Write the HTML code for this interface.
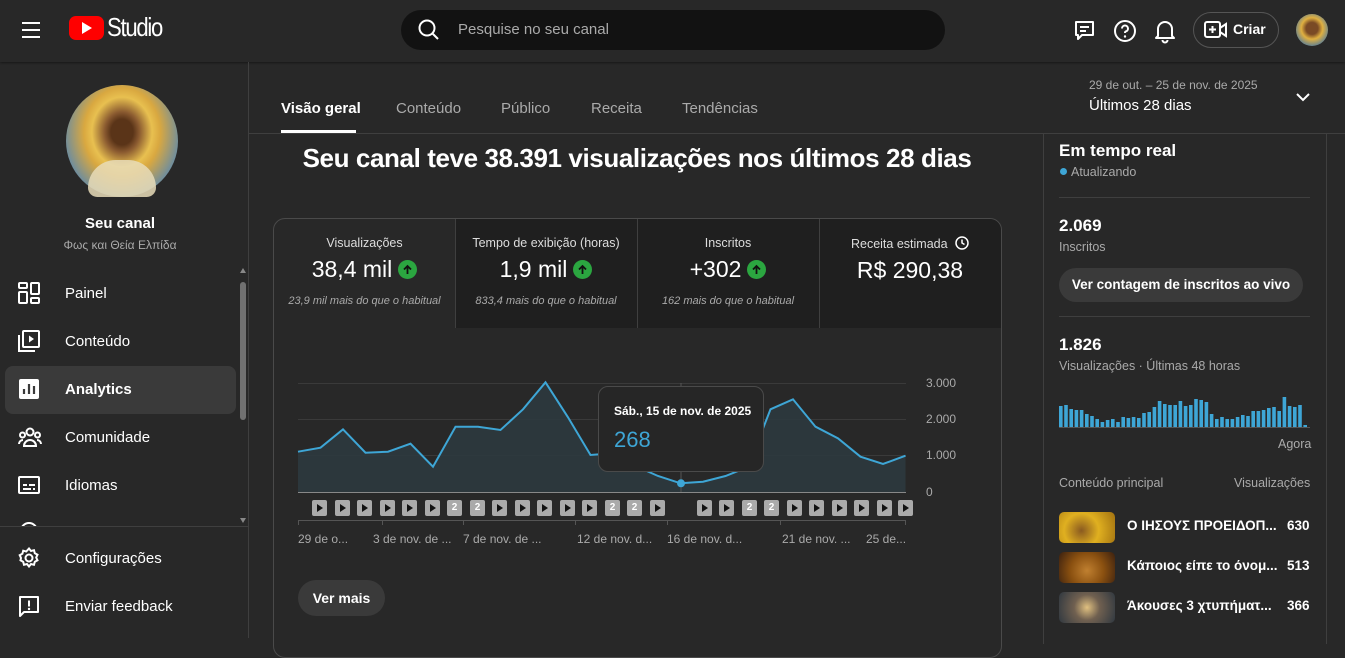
<!DOCTYPE html>
<html><head><meta charset="utf-8"><style>
*{box-sizing:border-box;margin:0;padding:0}
body{width:1345px;height:638px;overflow:hidden;background:#282828;color:#fff;font-family:"Liberation Sans",sans-serif;position:relative}
.a{position:absolute}
.g{color:#aaa}
.nav{position:absolute;left:0;width:240px;height:48px;display:flex;align-items:center;font-size:15px}
.nav svg{position:absolute;left:18px}
.nav span{position:absolute;left:65px}
.tile{position:absolute;top:1px;height:108px;text-align:center}
.tile .t{font-size:12.5px;color:#ddd;margin-top:17px}
.tile .v{font-size:23px;margin-top:6px;display:flex;justify-content:center;align-items:center;gap:6px}
.tile .s{font-size:11px;color:#aaa;font-style:italic;margin-top:12px}
.up{width:19px;height:19px;border-radius:50%;background:#2ba640;display:inline-flex;align-items:center;justify-content:center}
.bx{position:absolute;top:500px;width:15px;height:16px;background:#aaa;border-radius:2px;font-size:10px;font-weight:bold;color:#fff;text-align:center;line-height:16px}
.bx.p::after{content:"";position:absolute;left:5px;top:4px;border-left:6px solid #111;border-top:4px solid transparent;border-bottom:4px solid transparent}
.xl{position:absolute;top:532px;font-size:12px;color:#aaa}
.yl{position:absolute;left:926px;font-size:12px;color:#aaa}
</style></head><body>
<div class="a" style="left:0;top:0;width:1345px;height:62px;background:#282828;box-shadow:0 1px 2px rgba(0,0,0,.4)"></div>
<svg class="a" style="left:21px;top:21px" width="20" height="18"><path d="M1 2h18M1 9h18M1 16h18" stroke="#fff" stroke-width="2"/></svg>
<div class="a" style="left:69px;top:16px;width:35px;height:24px;background:#f00;border-radius:7px"></div>
<svg class="a" style="left:82px;top:22px" width="12" height="12"><path d="M0 0L10 6L0 12Z" fill="#fff"/></svg>
<div class="a" style="left:107px;top:12px;font-size:26px;letter-spacing:-1.5px;transform:scaleX(.85);transform-origin:left">Studio</div>
<div class="a" style="left:401px;top:10px;width:544px;height:40px;background:#121212;border-radius:20px"></div>
<svg class="a" style="left:418px;top:19px" width="22" height="22"><circle cx="9" cy="9" r="7.5" stroke="#fff" stroke-width="2" fill="none"/><path d="M14.5 14.5L20 20" stroke="#fff" stroke-width="2"/></svg>
<div class="a g" style="left:458px;top:21px;font-size:15px">Pesquise no seu canal</div>
<svg class="a" style="left:1073px;top:19px" width="24" height="24"><path d="M3 3h17v13H9l-4 4v-4H3z" stroke="#fff" stroke-width="2" fill="none" stroke-linejoin="round"/><path d="M7 8h9M7 12h6" stroke="#fff" stroke-width="2"/></svg>
<svg class="a" style="left:1113px;top:19px" width="24" height="24"><circle cx="12" cy="12" r="10" stroke="#fff" stroke-width="2" fill="none"/><path d="M9 9.5a3 3 0 1 1 3.5 3c-.5.2-.5.8-.5 1.5" stroke="#fff" stroke-width="2" fill="none"/><circle cx="12" cy="17.5" r="1.2" fill="#fff"/></svg>
<svg class="a" style="left:1153px;top:18px" width="24" height="26"><path d="M5 18V11a7 7 0 0 1 14 0v7l2 2H3z" stroke="#fff" stroke-width="2" fill="none" stroke-linejoin="round"/><path d="M9.5 22a2.5 2.5 0 0 0 5 0" stroke="#fff" stroke-width="2" fill="none"/></svg>
<div class="a" style="left:1193px;top:12px;width:86px;height:36px;border:1px solid #555;border-radius:18px"></div>
<svg class="a" style="left:1204px;top:20px" width="24" height="20"><rect x="1" y="2" width="15" height="15" rx="2" stroke="#fff" stroke-width="2" fill="none"/><path d="M8.5 6v7M5 9.5h7" stroke="#fff" stroke-width="2"/><path d="M16 8l6-4v12l-6-4" stroke="#fff" stroke-width="2" fill="none"/></svg>
<div class="a" style="left:1233px;top:21px;font-size:14px;font-weight:bold">Criar</div>
<div class="a" style="left:1296px;top:14px;width:32px;height:32px;border-radius:50%;background:radial-gradient(circle at 50% 45%,#7a4a25 0 25%,#e0b040 45%,#4f7aa0 80%)"></div>
<div class="a" style="left:248px;top:62px;width:1px;height:576px;background:#3f3f3f"></div>
<div class="a" style="left:66px;top:85px;width:112px;height:112px;border-radius:50%;background:radial-gradient(ellipse at 50% 42%,#5a3418 0 14%,#8a5a30 22%,#e8c050 38%,#d9a840 48%,#5a88b0 78%,#2f5f88 100%)"></div>
<div class="a" style="left:88px;top:160px;width:68px;height:37px;background:#e8dcb8;border-radius:30px 30px 10px 10px;opacity:.85"></div>
<div class="a" style="left:0;top:215px;width:240px;text-align:center;font-size:15px;font-weight:bold">Seu canal</div>
<div class="a g" style="left:0;top:238px;width:240px;text-align:center;font-size:12px">Φως και Θεία Ελπίδα</div>
<div class="a" style="left:5px;top:366px;width:231px;height:48px;background:#3a3a3a;border-radius:8px"></div>
<div class="a" style="left:240px;top:282px;width:6px;height:138px;background:#717171;border-radius:3px"></div>
<div class="a" style="left:240px;top:268px;border-bottom:5px solid #888;border-left:3px solid transparent;border-right:3px solid transparent"></div>
<div class="a" style="left:240px;top:518px;border-top:5px solid #888;border-left:3px solid transparent;border-right:3px solid transparent"></div>
<div class="nav" style="top:269px"><svg width="22" height="22"><g stroke="#fff" stroke-width="2" fill="none"><rect x="1" y="1" width="8" height="5" rx="1"/><rect x="1" y="10" width="8" height="11" rx="1"/><rect x="13" y="1" width="8" height="11" rx="1"/><rect x="13" y="16" width="8" height="5" rx="1"/></g></svg><span>Painel</span></div>
<div class="nav" style="top:317px"><svg width="22" height="22"><g stroke="#fff" stroke-width="2" fill="none"><rect x="5" y="1" width="16" height="16" rx="1"/><path d="M1 5v16h16"/></g><path d="M11 5.5l5 3.5-5 3.5z" fill="#fff"/></svg><span>Conteúdo</span></div>
<div class="nav" style="top:365px;font-weight:bold"><svg width="22" height="22"><rect x="1" y="1" width="20" height="20" rx="2" fill="#fff"/><path d="M6 16v-5M11 16V6M16 16v-8" stroke="#3a3a3a" stroke-width="2.2"/></svg><span>Analytics</span></div>
<div class="nav" style="top:413px"><svg width="24" height="22"><g stroke="#fff" stroke-width="2" fill="none"><circle cx="12" cy="6" r="3.5"/><circle cx="4.5" cy="9" r="2.5"/><circle cx="19.5" cy="9" r="2.5"/><path d="M6 20a6 6 0 0 1 12 0zM1 18a4 4 0 0 1 4-4M23 18a4 4 0 0 0-4-4"/></g></svg><span>Comunidade</span></div>
<div class="nav" style="top:461px"><svg width="22" height="22"><g stroke="#fff" stroke-width="2" fill="none"><rect x="1" y="3" width="20" height="16" rx="1"/><path d="M5 11h4M11 11h6M5 15h8M15 15h2"/></g></svg><span>Idiomas</span></div>
<div class="a" style="left:0;top:526px;width:248px;height:1px;background:#3f3f3f"></div>
<div class="a" style="left:0;top:520px;width:240px;height:6px;overflow:hidden"><div style="position:absolute;left:20px;top:2px;width:18px;height:18px;border:2px solid #fff;border-radius:50%"></div></div>
<div class="nav" style="top:534px"><svg width="22" height="22"><g stroke="#fff" stroke-width="2" fill="none"><circle cx="11" cy="11" r="3.5"/><path d="M11 1.5l2 2.5 3-.8.8 3 2.7 1.5-1.3 2.8 1.3 2.8-2.7 1.5-.8 3-3-.8-2 2.5-2-2.5-3 .8-.8-3-2.7-1.5L3 11 1.7 8.2l2.7-1.5.8-3 3 .8z"/></g></svg><span>Configurações</span></div>
<div class="nav" style="top:582px"><svg width="22" height="22"><path d="M2 2h18v15H6l-4 4z" stroke="#fff" stroke-width="2" fill="none" stroke-linejoin="round"/><path d="M11 5.5v6" stroke="#fff" stroke-width="2"/><circle cx="11" cy="14" r="1.2" fill="#fff"/></svg><span>Enviar feedback</span></div>
<div class="a" style="left:249px;top:133px;width:1096px;height:1px;background:#3f3f3f"></div>
<div class="a" style="left:281px;top:100px;font-size:15px;font-weight:bold">Visão geral</div>
<div class="a" style="left:281px;top:130px;width:75px;height:3px;background:#fff"></div>
<div class="a g" style="left:396px;top:100px;font-size:15px">Conteúdo</div>
<div class="a g" style="left:501px;top:100px;font-size:15px">Público</div>
<div class="a g" style="left:591px;top:100px;font-size:15px">Receita</div>
<div class="a g" style="left:682px;top:100px;font-size:15px">Tendências</div>
<div class="a g" style="left:1089px;top:78px;font-size:12px">29 de out. – 25 de nov. de 2025</div>
<div class="a" style="left:1089px;top:97px;font-size:15px">Últimos 28 dias</div>
<svg class="a" style="left:1295px;top:92px" width="16" height="12"><path d="M2 2l6 6 6-6" stroke="#fff" stroke-width="2" fill="none"/></svg>
<div class="a" style="left:263px;top:143px;width:748px;text-align:center;font-size:26px;font-weight:bold;letter-spacing:-.4px">Seu canal teve 38.391 visualizações nos últimos 28 dias</div>
<div class="a" style="left:273px;top:218px;width:729px;height:440px;border:1px solid #4a4a4a;border-radius:12px;overflow:hidden">
<div class="a" style="left:182px;top:0;width:546px;height:109px;background:#1f1f1f"></div>
<div class="a" style="left:181px;top:0;width:1px;height:109px;background:#3f3f3f"></div>
<div class="a" style="left:363px;top:0;width:1px;height:109px;background:#3f3f3f"></div>
<div class="a" style="left:545px;top:0;width:1px;height:109px;background:#3f3f3f"></div>
</div>
<div class="tile" style="left:274px;top:219px;width:181px"><div class="t">Visualizações</div><div class="v">38,4 mil <span class="up"><svg width="11" height="11"><path d="M5.5 10V2M2 5.5l3.5-3.5 3.5 3.5" stroke="#111" stroke-width="1.8" fill="none"/></svg></span></div><div class="s">23,9 mil mais do que o habitual</div></div>
<div class="tile" style="left:455px;top:219px;width:182px"><div class="t">Tempo de exibição (horas)</div><div class="v">1,9 mil <span class="up"><svg width="11" height="11"><path d="M5.5 10V2M2 5.5l3.5-3.5 3.5 3.5" stroke="#111" stroke-width="1.8" fill="none"/></svg></span></div><div class="s">833,4 mais do que o habitual</div></div>
<div class="tile" style="left:637px;top:219px;width:182px"><div class="t">Inscritos</div><div class="v">+302 <span class="up"><svg width="11" height="11"><path d="M5.5 10V2M2 5.5l3.5-3.5 3.5 3.5" stroke="#111" stroke-width="1.8" fill="none"/></svg></span></div><div class="s">162 mais do que o habitual</div></div>
<div class="tile" style="left:819px;top:219px;width:182px"><div class="t">Receita estimada <svg width="14" height="14" style="vertical-align:-2px;margin-left:4px"><circle cx="7" cy="7" r="6" stroke="#fff" stroke-width="1.5" fill="none"/><path d="M7 3.5V7l2.5 1.5" stroke="#fff" stroke-width="1.5" fill="none"/></svg></div><div class="v">R$ 290,38</div></div>
<svg class="a" style="left:0;top:0" width="1345" height="638">
<g stroke="#3a3a3a" stroke-width="1"><path d="M298 383.5H906M298 419.5H906M298 455.5H906"/></g>
<path d="M298 451.7L320.5 447.7L343 429.3L365.5 452.7L388 451.7L410.5 443.7L433 466.7L455.5 426.7L478 426.7L500.5 430L523 409.3L545.5 382.3L568 417.3L590.5 455L613 453.3L635.5 466L658 476L680.5 483.3L703 481.7L725.5 476L748 467L770.5 409.3L793 399.3L815.5 426.7L838 438.3L860.5 456.7L883 464L905.5 455.7V492H298Z" fill="#2d3a40" fill-opacity=".85"/>
<path d="M298 451.7L320.5 447.7L343 429.3L365.5 452.7L388 451.7L410.5 443.7L433 466.7L455.5 426.7L478 426.7L500.5 430L523 409.3L545.5 382.3L568 417.3L590.5 455L613 453.3L635.5 466L658 476L680.5 483.3L703 481.7L725.5 476L748 467L770.5 409.3L793 399.3L815.5 426.7L838 438.3L860.5 456.7L883 464L905.5 455.7" stroke="#3ea6d6" stroke-width="2" fill="none"/>
<path d="M298 492.5H906" stroke="#888" stroke-width="1"/>
<path d="M681 383V492" stroke="#555" stroke-width="1"/>
<circle cx="681" cy="483.3" r="4" fill="#3ea6d6"/>
<path d="M298 520.5H906" stroke="#555"/>
<g stroke="#555"><path d="M298.5 520v5M382.5 520v5M463.5 520v5M575.5 520v5M667.5 520v5M780.5 520v5M905.5 520v5"/></g>
</svg>
<div class="a" style="left:598px;top:386px;width:166px;height:86px;background:#262626;border:1px solid #4a4a4a;border-radius:10px"></div>
<div class="a" style="left:614px;top:404px;font-size:12px;font-weight:bold">Sáb., 15 de nov. de 2025</div>
<div class="a" style="left:614px;top:427px;font-size:22px;color:#3ea6d6">268</div>
<div class="yl" style="top:376px">3.000</div><div class="yl" style="top:412px">2.000</div><div class="yl" style="top:448px">1.000</div><div class="yl" style="top:485px">0</div>
<div class="bx p" style="left:312px"></div><div class="bx p" style="left:335px"></div><div class="bx p" style="left:357px"></div><div class="bx p" style="left:380px"></div><div class="bx p" style="left:402px"></div><div class="bx p" style="left:425px"></div><div class="bx" style="left:447px">2</div><div class="bx" style="left:470px">2</div><div class="bx p" style="left:492px"></div><div class="bx p" style="left:515px"></div><div class="bx p" style="left:537px"></div><div class="bx p" style="left:560px"></div><div class="bx p" style="left:582px"></div><div class="bx" style="left:605px">2</div><div class="bx" style="left:627px">2</div><div class="bx p" style="left:650px"></div>
<div class="bx p" style="left:697px"></div><div class="bx p" style="left:719px"></div><div class="bx" style="left:742px">2</div><div class="bx" style="left:764px">2</div><div class="bx p" style="left:787px"></div><div class="bx p" style="left:809px"></div><div class="bx p" style="left:832px"></div><div class="bx p" style="left:854px"></div><div class="bx p" style="left:877px"></div><div class="bx p" style="left:898px"></div>
<div class="xl" style="left:298px">29 de o...</div><div class="xl" style="left:373px">3 de nov. de ...</div><div class="xl" style="left:463px">7 de nov. de ...</div><div class="xl" style="left:577px">12 de nov. d...</div><div class="xl" style="left:667px">16 de nov. d...</div><div class="xl" style="left:782px">21 de nov. ...</div><div class="xl" style="left:866px">25 de...</div>
<div class="a" style="left:298px;top:580px;width:87px;height:36px;background:#3a3a3a;border-radius:18px;font-size:14px;font-weight:bold;text-align:center;line-height:36px">Ver mais</div>
<div class="a" style="left:1043px;top:134px;width:284px;height:510px;border-left:1px solid #3f3f3f;border-right:1px solid #3f3f3f"></div>
<div class="a" style="left:1059px;top:141px;font-size:17px;font-weight:bold">Em tempo real</div>
<div class="a" style="left:1060px;top:168px;width:7px;height:7px;border-radius:50%;background:#3ea6d6"></div>
<div class="a g" style="left:1071px;top:165px;font-size:12.5px">Atualizando</div>
<div class="a" style="left:1059px;top:197px;width:251px;height:1px;background:#3f3f3f"></div>
<div class="a" style="left:1059px;top:216px;font-size:17px;font-weight:bold">2.069</div>
<div class="a g" style="left:1059px;top:240px;font-size:12.5px">Inscritos</div>
<div class="a" style="left:1059px;top:268px;width:244px;height:34px;background:#3a3a3a;border-radius:17px;font-size:13.5px;font-weight:bold;text-align:center;line-height:34px">Ver contagem de inscritos ao vivo</div>
<div class="a" style="left:1059px;top:316px;width:251px;height:1px;background:#3f3f3f"></div>
<div class="a" style="left:1059px;top:335px;font-size:17px;font-weight:bold">1.826</div>
<div class="a g" style="left:1059px;top:359px;font-size:12.5px">Visualizações · Últimas 48 horas</div>
<svg class="a" style="left:1059px;top:395px" width="252" height="35"><g fill="#3ea6d6">
<rect x="0" y="11" width="3.6" height="21"/><rect x="5.2" y="10" width="3.6" height="22"/><rect x="10.4" y="14" width="3.6" height="18"/><rect x="15.6" y="15" width="3.6" height="17"/><rect x="20.8" y="15" width="3.6" height="17"/><rect x="26" y="19" width="3.6" height="13"/><rect x="31.2" y="21" width="3.6" height="11"/><rect x="36.4" y="24" width="3.6" height="8"/><rect x="41.6" y="27" width="3.6" height="5"/><rect x="46.8" y="25" width="3.6" height="7"/><rect x="52" y="24" width="3.6" height="8"/><rect x="57.2" y="27" width="3.6" height="5"/><rect x="62.4" y="22" width="3.6" height="10"/><rect x="67.6" y="23" width="3.6" height="9"/><rect x="72.8" y="22" width="3.6" height="10"/><rect x="78" y="23" width="3.6" height="9"/><rect x="83.2" y="18" width="3.6" height="14"/><rect x="88.4" y="17" width="3.6" height="15"/><rect x="93.6" y="12" width="3.6" height="20"/><rect x="98.8" y="6" width="3.6" height="26"/><rect x="104" y="9" width="3.6" height="23"/><rect x="109.2" y="10" width="3.6" height="22"/><rect x="114.4" y="10" width="3.6" height="22"/><rect x="119.6" y="6" width="3.6" height="26"/><rect x="124.8" y="11" width="3.6" height="21"/><rect x="130" y="10" width="3.6" height="22"/><rect x="135.2" y="4" width="3.6" height="28"/><rect x="140.4" y="5" width="3.6" height="27"/><rect x="145.6" y="7" width="3.6" height="25"/><rect x="150.8" y="19" width="3.6" height="13"/><rect x="156" y="24" width="3.6" height="8"/><rect x="161.2" y="22" width="3.6" height="10"/><rect x="166.4" y="24" width="3.6" height="8"/><rect x="171.6" y="24" width="3.6" height="8"/><rect x="176.8" y="22" width="3.6" height="10"/><rect x="182" y="20" width="3.6" height="12"/><rect x="187.2" y="21" width="3.6" height="11"/><rect x="192.4" y="16" width="3.6" height="16"/><rect x="197.6" y="16" width="3.6" height="16"/><rect x="202.8" y="15" width="3.6" height="17"/><rect x="208" y="13" width="3.6" height="19"/><rect x="213.2" y="12" width="3.6" height="20"/><rect x="218.4" y="16" width="3.6" height="16"/><rect x="223.6" y="2" width="3.6" height="30"/><rect x="228.8" y="11" width="3.6" height="21"/><rect x="234" y="12" width="3.6" height="20"/><rect x="239.2" y="10" width="3.6" height="22"/><rect x="244.4" y="30" width="3.6" height="2"/>
</g><path d="M0 32.5H251" stroke="#555"/></svg>
<div class="a g" style="left:1278px;top:437px;font-size:12.5px">Agora</div>
<div class="a g" style="left:1059px;top:476px;font-size:12.5px">Conteúdo principal</div>
<div class="a g" style="left:1234px;top:476px;font-size:12.5px">Visualizações</div>
<div class="a" style="left:1059px;top:512px;width:56px;height:31px;border-radius:5px;background:radial-gradient(circle at 40% 60%,#8a5a20,#e0b020 45%,#a07010)"></div>
<div class="a" style="left:1059px;top:552px;width:56px;height:31px;border-radius:5px;background:radial-gradient(circle at 50% 60%,#c08030,#8a5010 50%,#3a2010)"></div>
<div class="a" style="left:1059px;top:592px;width:56px;height:31px;border-radius:5px;background:radial-gradient(circle at 50% 50%,#e0c080,#706050 40%,#303840)"></div>
<div class="a" style="left:1127px;top:518px;font-size:13.5px;font-weight:bold">Ο ΙΗΣΟΥΣ ΠΡΟΕΙΔΟΠ...</div><div class="a" style="left:1287px;top:518px;font-size:13.5px;font-weight:bold">630</div>
<div class="a" style="left:1127px;top:558px;font-size:13.5px;font-weight:bold">Κάποιος είπε το όνομ...</div><div class="a" style="left:1287px;top:558px;font-size:13.5px;font-weight:bold">513</div>
<div class="a" style="left:1127px;top:598px;font-size:13.5px;font-weight:bold">Άκουσες 3 χτυπήματ...</div><div class="a" style="left:1287px;top:598px;font-size:13.5px;font-weight:bold">366</div>
</body></html>
